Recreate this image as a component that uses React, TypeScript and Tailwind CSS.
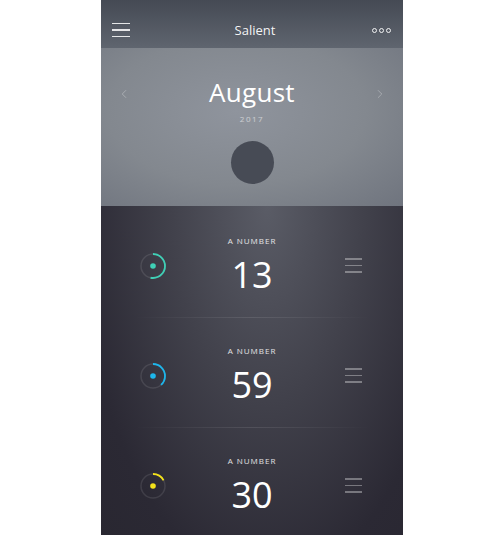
import { ChevronLeft, ChevronRight } from 'lucide-react'

interface Item {
  value: number
  color: string
  progress: number
}

const items: Item[] = [
  { value: 13, color: '#3fd0b6', progress: 0.53 },
  { value: 59, color: '#1db6ec', progress: 0.38 },
  { value: 30, color: '#f3e21b', progress: 0.17 },
]

function Ring({ color, progress }: { color: string; progress: number }) {
  const r = 12
  const c = 2 * Math.PI * r
  return (
    <svg width="28" height="28" viewBox="0 0 28 28">
      <circle cx="14" cy="14" r={r} fill="none" stroke="rgba(255,255,255,0.1)" strokeWidth="1.5" />
      <circle
        cx="14"
        cy="14"
        r={r}
        fill="none"
        stroke={color}
        strokeWidth="1.8"
        strokeDasharray={`${c * progress} ${c}`}
        transform="rotate(-90 14 14)"
      />
      <circle cx="14" cy="14" r="2.8" fill={color} />
    </svg>
  )
}

function Lines({ tone }: { tone: string }) {
  return (
    <div className="flex flex-col gap-[5px] w-[17px]">
      <div className={`h-[1.5px] w-full ${tone}`} />
      <div className={`h-[1.5px] w-full ${tone}`} />
      <div className={`h-[1.5px] w-full ${tone}`} />
    </div>
  )
}

function App() {
  return (
    <div className="w-[500px] h-[535px] bg-white" style={{ fontFamily: '"Open Sans", "Liberation Sans", sans-serif' }}>
      <div className="ml-[101px] w-[302px] h-[535px] overflow-hidden flex flex-col text-white">
        {/* header, with room for the status bar */}
        <div className="h-[48px] shrink-0 flex items-center justify-between pt-[12px] pl-[11px] pr-[12px] bg-linear-to-b from-[#454a54] to-[#5f656f]">
          <div className="flex flex-col gap-[5px] w-[18px]">
            <div className="h-[1.5px] w-full bg-white/85" />
            <div className="h-[1.5px] w-full bg-white/85" />
            <div className="h-[1.5px] w-full bg-white/85" />
          </div>
          <div className="text-[13px] leading-[18px] text-white/95 pl-[8px]">Salient</div>
          <div className="flex gap-[2px]">
            <div className="w-[5px] h-[5px] rounded-full border border-white/90" />
            <div className="w-[5px] h-[5px] rounded-full border border-white/90" />
            <div className="w-[5px] h-[5px] rounded-full border border-white/90" />
          </div>
        </div>

        {/* month */}
        <div className="h-[158px] shrink-0 flex flex-col items-center pt-[28px] bg-[radial-gradient(ellipse_at_45%_40%,#8f949d_0%,#83888f_55%,#6f747e_100%)]">
          <div className="w-full flex items-center justify-between px-[16px]">
            <ChevronLeft size={14} strokeWidth={1} className="text-white/50 mt-[4px]" />
            <div className="text-[26px] leading-[32px] tracking-[0.3px]">August</div>
            <ChevronRight size={14} strokeWidth={1} className="text-white/50 mt-[4px]" />
          </div>
          <div className="mt-[5px] text-[8px] leading-[12px] tracking-[1.5px] text-white/55">2017</div>
          <div className="mt-[16px] w-[43px] h-[43px] rounded-full bg-[#474b55]" />
        </div>

        {/* list */}
        <div className="flex-1 flex flex-col bg-[radial-gradient(ellipse_at_55%_0%,#5a5c66_0%,#42424c_40%,#2b2934_80%,#292731_100%)]">
          {items.map((item, i) => (
            <div key={i} className="flex flex-col">
              <div className={`flex items-center pl-[38px] pr-[41px] ${i === 0 ? 'pt-[30px]' : 'pt-[28px]'} pb-[22px]`}>
                <Ring color={item.color} progress={item.progress} />
                <div className="flex-1 flex flex-col items-center pr-[8px]">
                  <div className="text-[8px] leading-[10px] tracking-[1px] text-white/85">A NUMBER</div>
                  <div className="mt-[9px] text-[36px] leading-[40px]">{item.value}</div>
                </div>
                <Lines tone="bg-white/35" />
              </div>
              {i < items.length - 1 && (
                <div className="mx-[33px] h-px bg-linear-to-r from-white/0 via-white/10 to-white/0" />
              )}
            </div>
          ))}
        </div>
      </div>
    </div>
  )
}

export default App
